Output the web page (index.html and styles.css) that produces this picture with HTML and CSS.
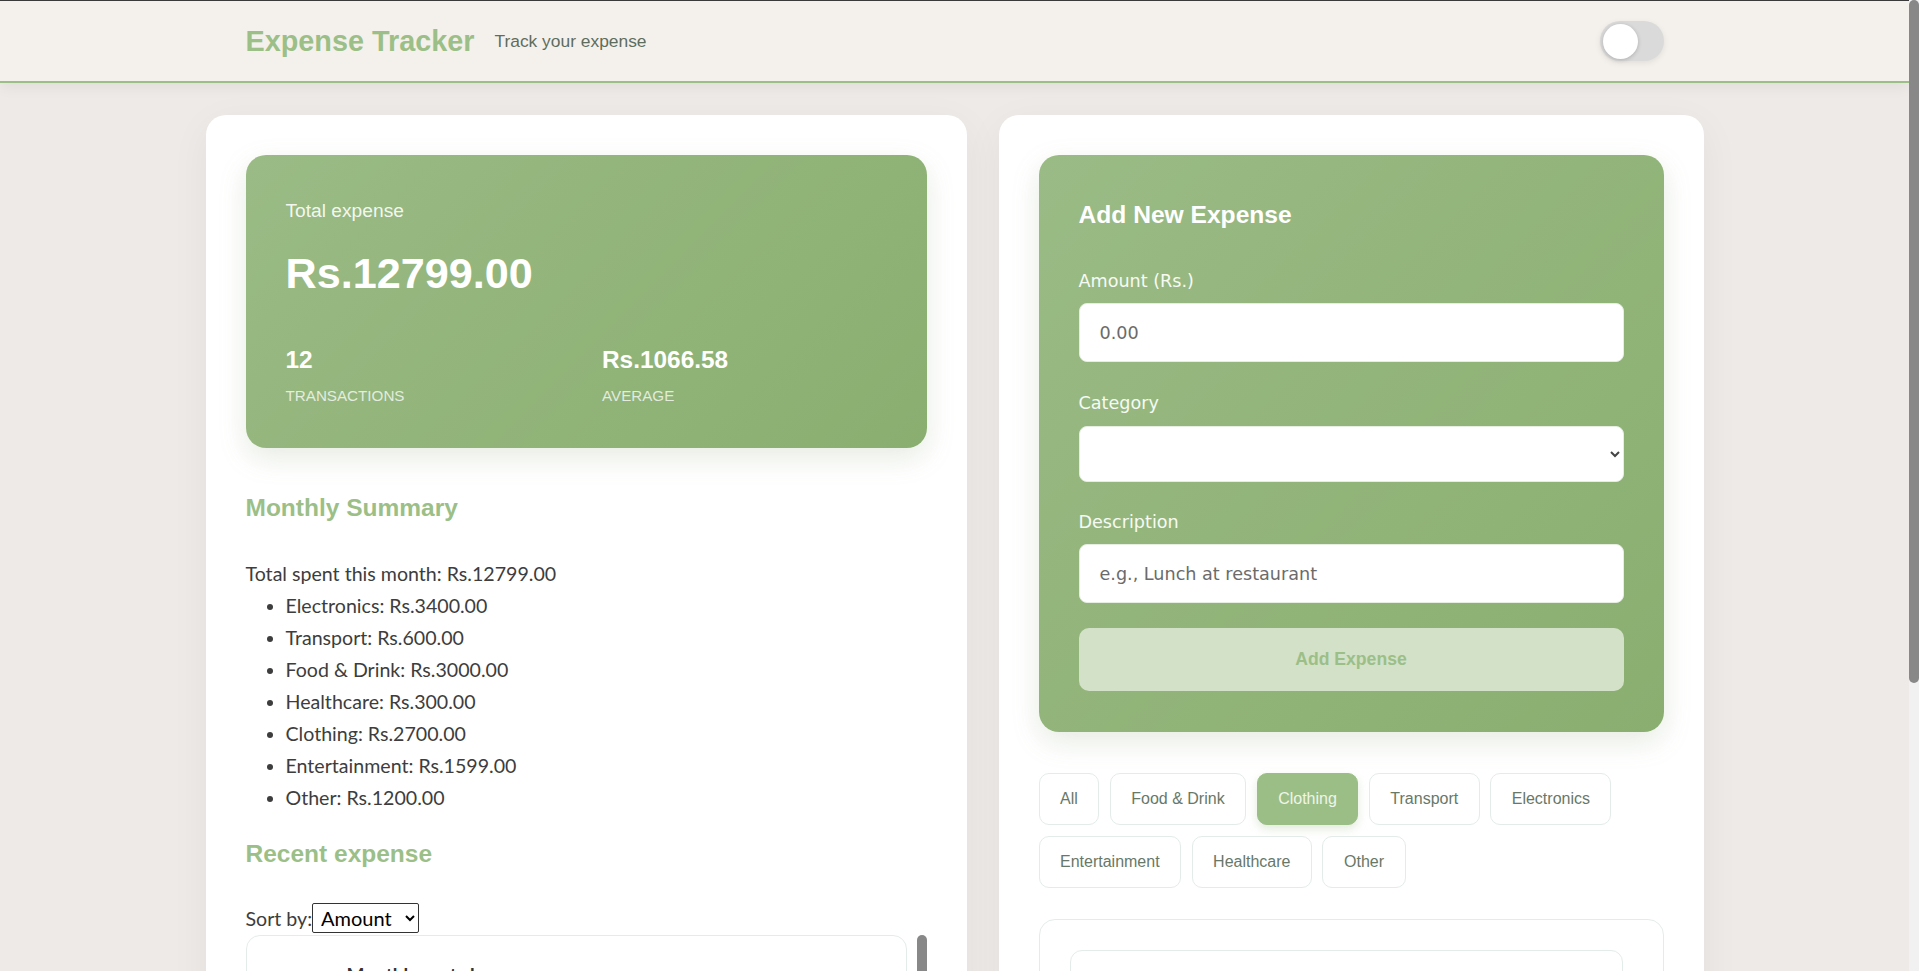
FILE: index.html
```html
<!DOCTYPE html>
<html lang="en">
<head>
<meta charset="utf-8">
<title>Expense Tracker</title>
<link rel="stylesheet" href="styles.css">
</head>
<body>
<header class="topbar">
  <div class="topbar-inner">
    <div class="brand">
      <h1 class="brand-title">Expense Tracker</h1>
      <span class="brand-tagline">Track your expense</span>
    </div>
    <div class="toggle"><span class="toggle-knob"></span></div>
  </div>
</header>

<main class="layout">
  <section class="card card-left">
    <div class="summary-card">
      <p class="summary-label">Total expense</p>
      <p class="summary-amount">Rs.12799.00</p>
      <div class="summary-stats">
        <div class="stat">
          <div class="stat-value">12</div>
          <div class="stat-label">TRANSACTIONS</div>
        </div>
        <div class="stat">
          <div class="stat-value">Rs.1066.58</div>
          <div class="stat-label">AVERAGE</div>
        </div>
      </div>
    </div>

    <h3 class="section-title">Monthly Summary</h3>
    <div class="month-text">
      <div>Total spent this month: Rs.12799.00</div>
      <ul class="month-list">
        <li>Electronics: Rs.3400.00</li>
        <li>Transport: Rs.600.00</li>
        <li>Food &amp; Drink: Rs.3000.00</li>
        <li>Healthcare: Rs.300.00</li>
        <li>Clothing: Rs.2700.00</li>
        <li>Entertainment: Rs.1599.00</li>
        <li>Other: Rs.1200.00</li>
      </ul>
    </div>

    <h3 class="section-title section-title-recent">Recent expense</h3>
    <div class="sort-row">
      <span>Sort by:</span><select class="sort-select"><option>Amount</option><option>Date</option></select>
    </div>
    <div class="recent-wrap">
      <div class="recent-scroll">
        <div class="recent-item">
          <div class="item-body">
            <div class="item-desc">Monthly rent share</div>
            <div class="item-meta">Other · 2024-05-01</div>
          </div>
          <div class="item-amount">Rs.3400.00</div>
        </div>
        <div class="recent-item">
          <div class="item-body">
            <div class="item-desc">New headphones</div>
            <div class="item-meta">Electronics · 2024-05-03</div>
          </div>
          <div class="item-amount">Rs.3000.00</div>
        </div>
        <div class="recent-item">
          <div class="item-body">
            <div class="item-desc">Winter jacket</div>
            <div class="item-meta">Clothing · 2024-05-06</div>
          </div>
          <div class="item-amount">Rs.2700.00</div>
        </div>
        <div class="recent-item">
          <div class="item-body">
            <div class="item-desc">Concert tickets</div>
            <div class="item-meta">Entertainment · 2024-05-09</div>
          </div>
          <div class="item-amount">Rs.1599.00</div>
        </div>
      </div>
      <span class="fake-thumb"></span>
    </div>
  </section>

  <section class="card card-right">
    <div class="form-card">
      <h2 class="form-title">Add New Expense</h2>
      <div class="form-group">
        <label class="form-label">Amount (Rs.)</label>
        <input class="form-input" type="text" placeholder="0.00">
      </div>
      <div class="form-group form-group-select">
        <label class="form-label">Category</label>
        <select class="form-select"><option></option></select>
      </div>
      <div class="form-group form-group-last">
        <label class="form-label">Description</label>
        <input class="form-input" type="text" placeholder="e.g., Lunch at restaurant">
      </div>
      <button class="add-btn" type="button">Add Expense</button>
    </div>

    <div class="chips">
      <button class="chip" type="button">All</button>
      <button class="chip" type="button">Food &amp; Drink</button>
      <button class="chip chip-active" type="button">Clothing</button>
      <button class="chip" type="button">Transport</button>
      <button class="chip" type="button">Electronics</button>
      <button class="chip" type="button">Entertainment</button>
      <button class="chip" type="button">Healthcare</button>
      <button class="chip" type="button">Other</button>
    </div>

    <div class="filtered-box">
      <div class="filtered-item">
        <div class="item-body">
          <div class="item-desc">Winter jacket</div>
          <div class="item-meta">Clothing · 2024-05-06</div>
        </div>
        <div class="item-amount">Rs.2700.00</div>
      </div>
    </div>
  </section>
</main>

<div class="page-scrollbar"><span class="page-thumb"></span></div>
</body>
</html>
```

FILE: styles.css
```css
html {
  background: #edeae7;
}

body {
  margin: 0;
  padding-right: 10px;
  background: #edeae7;
  font-family: "Liberation Sans", Arial, sans-serif;
  line-height: 1.6;
  color: #333;
}

/* Simulated window scrollbar */
.page-scrollbar {
  position: fixed;
  top: 0;
  right: 0;
  width: 10px;
  height: 100vh;
  background: #f1f1f1;
  z-index: 10;
}

.page-thumb {
  display: block;
  width: 10px;
  height: 683px;
  border-radius: 5px;
  background: #888;
}

/* Header */
.topbar {
  background: #f4f1ec;
  border-top: 1px solid #3a3a3a;
  border-bottom: 2px solid #9bbf87;
  box-shadow: 0 4px 14px rgba(0, 0, 0, 0.06);
}

.topbar-inner {
  max-width: 1498px;
  margin: 0 auto;
  padding: 20px 40px;
  box-sizing: border-box;
  display: flex;
  align-items: center;
  justify-content: space-between;
}

.brand {
  display: flex;
  align-items: center;
  gap: 20px;
}

.brand-title {
  margin: 0;
  font-size: 28.8px;
  line-height: 1.2;
  font-weight: 700;
  color: #9bbf87;
}

.brand-tagline {
  font-size: 17.4px;
  line-height: 1.2;
  color: #5e6d5e;
}

.toggle {
  width: 64px;
  height: 40px;
  border-radius: 20px;
  background: #dadada;
  box-shadow: 0 2px 6px rgba(0, 0, 0, 0.08);
  display: flex;
  align-items: center;
  padding: 0 3px;
  box-sizing: border-box;
}

.toggle-knob {
  width: 35px;
  height: 35px;
  border-radius: 50%;
  background: #fff;
  box-shadow: 0 1px 4px rgba(0, 0, 0, 0.2);
}

/* Layout */
.layout {
  max-width: 1498px;
  margin: 32px auto 32px;
  display: grid;
  grid-template-columns: minmax(0, 761fr) minmax(0, 705fr);
  gap: 32px;
  align-items: stretch;
}

.card {
  background: #fff;
  border-radius: 20px;
  padding: 40px;
  box-shadow: 0 10px 40px rgba(0, 0, 0, 0.05);
  min-width: 0;
}

/* Summary card */
.summary-card {
  background: linear-gradient(135deg, #9abb85 0%, #8aae70 100%);
  border-radius: 20px;
  padding: 40px;
  color: #fff;
  box-shadow: 0 10px 28px rgba(120, 150, 100, 0.18);
  margin-bottom: 40px;
}

.summary-label {
  margin: 1px 0 0;
  font-size: 19.2px;
  color: rgba(255, 255, 255, 0.9);
}

.summary-amount {
  margin: 21px 0 0;
  font-size: 43.2px;
  line-height: 1.2;
  font-weight: 700;
}

.summary-stats {
  margin-top: 40px;
  display: grid;
  grid-template-columns: 1fr 1fr;
  gap: 32px;
}

.stat-value {
  font-size: 24.4px;
  font-weight: 700;
}

.stat-label {
  margin-top: 5px;
  font-size: 15.2px;
  color: rgba(255, 255, 255, 0.75);
}

.section-title {
  margin: 20px 0 31px;
  font-size: 24.5px;
  font-weight: 700;
  color: #9bbf87;
}

.month-text {
  font-family: Lato, "Open Sans", sans-serif;
  font-size: 19.6px;
  line-height: 32px;
  color: #3d3d3d;
}

.month-list {
  margin: 0;
  padding-left: 40px;
}

.section-title-recent {
  margin-top: 20px;
  margin-bottom: 30px;
}

.sort-row {
  display: flex;
  align-items: center;
  height: 30px;
  font-family: Lato, "Open Sans", sans-serif;
  font-size: 19.6px;
  color: #3d3d3d;
}

.sort-select {
  width: 107px;
  height: 30px;
  font-family: Lato, "Open Sans", sans-serif;
  font-size: 20px;
  color: #000;
  background: #fff;
  border: 1px solid #333;
  border-radius: 2px;
  padding: 0 4px;
}

.recent-wrap {
  position: relative;
  margin-top: 2px;
}

.recent-scroll {
  height: 372px;
  overflow: hidden;
  padding-right: 20px;
  display: flex;
  flex-direction: column;
  gap: 14px;
}

.fake-thumb {
  position: absolute;
  top: 0;
  right: 0;
  width: 10px;
  height: 210px;
  border-radius: 5px;
  background: #888;
}

.recent-item {
  flex: none;
  display: flex;
  align-items: center;
  gap: 24px;
  padding: 24px 24px 24px 100px;
  border: 1px solid #e4ecea;
  border-radius: 14px;
}

.item-body {
  flex: 1;
  min-width: 0;
}

.item-desc {
  font-family: Lato, "Open Sans", sans-serif;
  font-size: 19px;
  font-weight: 700;
  color: #333;
}

.item-meta {
  font-family: Lato, "Open Sans", sans-serif;
  font-size: 15px;
  color: #888;
}

.item-amount {
  font-weight: 700;
  font-size: 18px;
  color: #8aae70;
}

/* Form card */
.form-card {
  background: linear-gradient(135deg, #9abb85 0%, #8aae70 100%);
  border-radius: 20px;
  padding: 40px 40px 41px;
  box-shadow: 0 10px 28px rgba(120, 150, 100, 0.18);
  margin-bottom: 41px;
}

.form-title {
  margin: 0 0 32.5px;
  font-size: 24.6px;
  line-height: 1.6;
  font-weight: 700;
  color: #fff;
}

.form-group {
  margin-bottom: 27px;
}

.form-group-select {
  margin-bottom: 25.5px;
}

.form-group-last {
  margin-bottom: 25px;
}

.form-label {
  display: block;
  margin-bottom: 8.5px;
  font-family: "DejaVu Sans", Verdana, sans-serif;
  font-size: 17.6px;
  line-height: 1.6;
  color: #f7faf4;
}

.form-input,
.form-select {
  display: block;
  width: 100%;
  box-sizing: border-box;
  border: 1px solid #e6eee2;
  border-radius: 8px;
  background: #fff;
  font-family: "DejaVu Sans", Verdana, sans-serif;
  font-size: 17.6px;
  color: #444;
  outline: none;
}

.form-input {
  height: 59px;
  padding: 0 20px;
}

.form-input::placeholder {
  color: #6b6b6b;
}

.form-select {
  height: 56px;
  padding: 0 8px 0 20px;
}

.add-btn {
  display: block;
  width: 100%;
  height: 63px;
  border: none;
  border-radius: 10px;
  background: #d3e1c9;
  color: #9bbf87;
  font-family: "Liberation Sans", Arial, sans-serif;
  font-size: 17.6px;
  font-weight: 700;
}

/* Chips */
.chips {
  display: flex;
  flex-wrap: wrap;
  gap: 10.5px;
}

.chip {
  height: 52px;
  padding: 0 20.5px;
  border: 1px solid #e3ece8;
  border-radius: 10px;
  background: #fff;
  font-family: "Liberation Sans", Arial, sans-serif;
  font-size: 16px;
  color: #687868;
}

.chip-active {
  background: #9bbe86;
  border-color: #9bbe86;
  color: #eef5ea;
  box-shadow: 0 4px 10px rgba(140, 175, 115, 0.25);
}

.filtered-box {
  margin-top: 31px;
  border: 1px solid #e4ecea;
  border-radius: 16px;
  padding: 30px 40px 30px 30px;
  min-height: 300px;
}

.filtered-item {
  display: flex;
  align-items: center;
  gap: 24px;
  padding: 22px 24px;
  border: 1px solid #e4ecea;
  border-radius: 12px;
}
```
